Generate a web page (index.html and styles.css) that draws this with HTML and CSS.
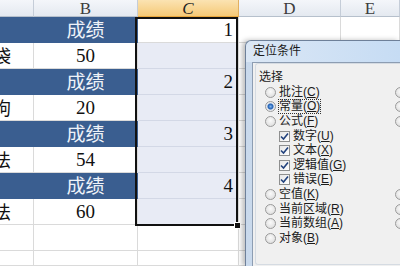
FILE: index.html
```html
<!DOCTYPE html>
<html lang="zh-CN">
<head>
  <meta charset="UTF-8" />
  <title>定位条件</title>
  <link rel="stylesheet" href="styles.css">
</head>
<body>

<!-- Worksheet -->
<div class="sheet">
  <div class="ch">&nbsp;</div>
  <div class="ch">B</div>
  <div class="ch on">C</div>
  <div class="ch">D</div>
  <div class="ch">E</div>

  <div class="cell a hd"></div><div class="cell b hd">成绩</div><div class="cell c act">1</div><div class="cell"></div><div class="cell"></div>
  <div class="cell a"><span>袋</span></div><div class="cell b">50</div><div class="cell c sel"></div><div class="cell"></div><div class="cell"></div>
  <div class="cell a hd"></div><div class="cell b hd">成绩</div><div class="cell c sel">2</div><div class="cell"></div><div class="cell"></div>
  <div class="cell a"><span>狗</span></div><div class="cell b">20</div><div class="cell c sel"></div><div class="cell"></div><div class="cell"></div>
  <div class="cell a hd"></div><div class="cell b hd">成绩</div><div class="cell c sel">3</div><div class="cell"></div><div class="cell"></div>
  <div class="cell a"><span>法</span></div><div class="cell b">54</div><div class="cell c sel"></div><div class="cell"></div><div class="cell"></div>
  <div class="cell a hd"></div><div class="cell b hd">成绩</div><div class="cell c sel">4</div><div class="cell"></div><div class="cell"></div>
  <div class="cell a"><span>法</span></div><div class="cell b">60</div><div class="cell c sel"></div><div class="cell"></div><div class="cell"></div>
  <div class="cell a"></div><div class="cell b"></div><div class="cell c"></div><div class="cell"></div><div class="cell"></div>
  <div class="cell a"></div><div class="cell b"></div><div class="cell c"></div><div class="cell"></div><div class="cell"></div>

  <!-- selection frame -->
  <div class="selbox"><i class="handle"></i></div>
</div>

<!-- Go To Special dialog -->
<div class="dlg">
  <div class="title">定位条件</div>
  <div class="client">
    <div class="group">
      <div class="legend">选择</div>
      <div class="opts">
        <div class="col">
          <div class="opt"><i class="radio"></i><span>批注(<u>C</u>)</span></div>
          <div class="opt"><i class="radio checked"></i><span class="focus">常量(<u>O</u>)</span></div>
          <div class="opt"><i class="radio"></i><span>公式(<u>F</u>)</span></div>
          <div class="opt sub"><i class="check"><svg width="9" height="9" viewBox="0 0 9 9"><polyline points="1,4.5 3.5,7 8,1.5" fill="none" stroke="#22427d" stroke-width="1.6"/></svg></i><span>数字(<u>U</u>)</span></div>
          <div class="opt sub"><i class="check"><svg width="9" height="9" viewBox="0 0 9 9"><polyline points="1,4.5 3.5,7 8,1.5" fill="none" stroke="#22427d" stroke-width="1.6"/></svg></i><span>文本(<u>X</u>)</span></div>
          <div class="opt sub"><i class="check"><svg width="9" height="9" viewBox="0 0 9 9"><polyline points="1,4.5 3.5,7 8,1.5" fill="none" stroke="#22427d" stroke-width="1.6"/></svg></i><span>逻辑值(<u>G</u>)</span></div>
          <div class="opt sub"><i class="check"><svg width="9" height="9" viewBox="0 0 9 9"><polyline points="1,4.5 3.5,7 8,1.5" fill="none" stroke="#22427d" stroke-width="1.6"/></svg></i><span>错误(<u>E</u>)</span></div>
          <div class="opt"><i class="radio"></i><span>空值(<u>K</u>)</span></div>
          <div class="opt"><i class="radio"></i><span>当前区域(<u>R</u>)</span></div>
          <div class="opt"><i class="radio"></i><span>当前数组(<u>A</u>)</span></div>
          <div class="opt"><i class="radio"></i><span>对象(<u>B</u>)</span></div>
        </div>
        <div class="col">
          <div class="opt"><i class="radio"></i></div>
          <div class="opt"><i class="radio"></i></div>
          <div class="opt"><i class="radio"></i></div>
          <div class="opt"></div>
          <div class="opt"></div>
          <div class="opt"></div>
          <div class="opt"></div>
          <div class="opt"><i class="radio"></i></div>
          <div class="opt"><i class="radio"></i></div>
          <div class="opt"><i class="radio"></i></div>
        </div>
      </div>
    </div>
  </div>
</div>

</body>
</html>
```

FILE: styles.css
```css
body {
  margin: 0;
  width: 400px;
  height: 266px;
  overflow: hidden;
  position: relative;
  background: white;
  font-family: "Liberation Serif", "Noto Sans CJK SC", serif;
}

.sheet {
  display: grid;
  grid-template-columns: 34px 104px 101px 102px 59px;
  grid-template-rows: 17px repeat(9, 26px) 15px;
  position: relative;
}

.ch {
  box-sizing: border-box;
  background: linear-gradient(#f4f6fa, #e4e9f0);
  border-right: 1px solid #c5cdd8;
  border-bottom: 1px solid #b6c0cc;
  color: #3c3c3c;
  font-size: 17px;
  line-height: 17px;
  text-align: center;
  overflow: hidden;
}

.ch.on {
  background: linear-gradient(#fbe3b2, #f5c977);
  border-bottom: 1px solid #e9a73c;
  border-right: 1px solid #e2b060;
  color: #222;
  font-style: italic;
}

.cell {
  box-sizing: border-box;
  border-right: 1px solid #dadada;
  border-bottom: 1px solid #dadada;
  font-size: 19px;
  line-height: 25px;
  color: #111;
  overflow: hidden;
  white-space: nowrap;
}

.cell.b {
  text-align: center;
}

.cell.a span {
  display: inline-block;
  margin-left: -7px;
  font-family: "Noto Sans CJK SC", sans-serif;
  font-size: 18px;
}

.cell.hd {
  background: #3a5e90;
  border-color: #3a5e90;
  color: #eef2f8;
  font-family: "Noto Sans CJK SC", sans-serif;
  line-height: 24px;
}

.cell.c {
  text-align: right;
  padding-right: 5px;
}

.cell.sel {
  background: #e8ebf5;
  border-bottom-color: #d3d8e6;
}

.selbox {
  position: absolute;
  left: 135px;
  top: 17px;
  width: 103px;
  height: 209px;
  box-sizing: border-box;
  border: 2px solid #111;
}

.handle {
  position: absolute;
  right: -5px;
  bottom: -5px;
  width: 5px;
  height: 5px;
  background: #111;
  border: 1px solid white;
}

/* dialog */
.dlg {
  position: absolute;
  left: 245px;
  top: 40px;
  width: 155px;
  height: 226px;
  box-sizing: border-box;
  border: 1px solid #6e8099;
  border-right: none;
  border-bottom: none;
  border-radius: 6px 0 0 0;
  background: linear-gradient(90deg, #c9d9ec, #d3e3f5);
  padding-left: 6px;
  box-shadow: -3px 0 5px rgba(0,0,0,0.25);
  font-family: "Liberation Sans", "Noto Sans CJK SC", sans-serif;
  font-size: 12px;
  color: #1b1b1b;
  overflow: hidden;
}

.title {
  height: 21px;
  line-height: 21px;
  background: linear-gradient(90deg, #dbe7f5, #c6dcf4);
  margin-left: -6px;
  padding-left: 7px;
  border-radius: 6px 0 0 0;
}

.client {
  height: 100%;
  background: #f0f0f0;
  border-top: 1px solid #8d9db2;
  border-left: 1px solid #8d9db2;
  padding-left: 2px;
}

.group {
  border: 1px solid #d5dbe2;
  border-right: none;
  border-radius: 3px 0 0 3px;
  height: 200px;
}

.legend {
  padding: 6px 0 1px 3px;
  line-height: 14px;
}

.opts {
  display: flex;
}

.col {
  width: 130px;
  flex-shrink: 0;
}

.opt {
  display: flex;
  align-items: center;
  gap: 3px;
  height: 14.6px;
  padding-left: 9px;
  white-space: nowrap;
  line-height: 13px;
}

.opt.sub {
  padding-left: 23px;
}

.radio {
  width: 11px;
  height: 11px;
  box-sizing: border-box;
  border-radius: 50%;
  border: 1px solid #9a9a9a;
  background: radial-gradient(circle at 50% 40%, #fafafa, #d8d8d8);
  flex-shrink: 0;
}

.radio.checked {
  background: radial-gradient(circle, #7fb4ec 0, #1f5fb4 2.5px, #e2e6ec 3.5px, #f4f4f4 100%);
}

.check {
  width: 11px;
  height: 11px;
  box-sizing: border-box;
  border: 1px solid #8e8f8f;
  background: linear-gradient(135deg, #e6e6e6, #ffffff);
  display: flex;
  align-items: center;
  justify-content: center;
  flex-shrink: 0;
}

.focus {
  outline: 1px dotted #333;
}
```
